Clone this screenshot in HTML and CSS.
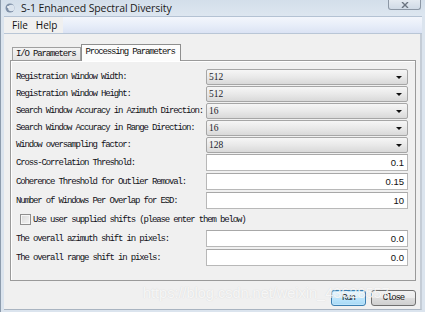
FILE: index.html
```html
<!DOCTYPE html>
<html lang="en">
<head>
  <meta charset="UTF-8" />
  <title>S-1 Enhanced Spectral Diversity</title>
  <link rel="stylesheet" href="styles.css">
</head>
<body>

  <div class="window">
    <div class="titlebar">
      <svg class="app-icon" width="10" height="10" viewBox="0 0 10 10">
        <circle cx="5" cy="5" r="4.5" fill="#7e8fa6"/>
        <circle cx="6.3" cy="5" r="3.2" fill="#dbe4ee"/>
        <circle cx="3" cy="4" r="0.9" fill="#fff"/>
      </svg>
      <span class="title">S-1 Enhanced Spectral Diversity</span>
      <div class="close-btn">
        <svg width="8" height="6" viewBox="0 0 8 6"><path d="M1 0 L7 6 M7 0 L1 6" stroke="#6b7480" stroke-width="1.4"/></svg>
      </div>
    </div>

    <div class="menubar">
      <span class="menu-item">File</span>
      <span class="menu-item">Help</span>
      <div class="menu-fill"></div>
    </div>

    <div class="content">
      <div class="tabs">
        <div class="tab">I/O Parameters</div>
        <div class="tab active">Processing Parameters</div>
      </div>

      <div class="panel">
        <div class="row">
          <label>Registration Window Width:</label>
          <div class="combo"><span>512</span><i class="arrow"></i></div>
        </div>
        <div class="row">
          <label>Registration Window Height:</label>
          <div class="combo"><span>512</span><i class="arrow"></i></div>
        </div>
        <div class="row">
          <label>Search Window Accuracy in Azimuth Direction:</label>
          <div class="combo"><span>16</span><i class="arrow"></i></div>
        </div>
        <div class="row">
          <label>Search Window Accuracy in Range Direction:</label>
          <div class="combo"><span>16</span><i class="arrow"></i></div>
        </div>
        <div class="row">
          <label>Window oversampling factor:</label>
          <div class="combo"><span>128</span><i class="arrow"></i></div>
        </div>

        <div class="row text-row">
          <label>Cross-Correlation Threshold:</label>
          <div class="field">0.1</div>
        </div>
        <div class="row text-row">
          <label>Coherence Threshold for Outlier Removal:</label>
          <div class="field">0.15</div>
        </div>
        <div class="row text-row">
          <label>Number of Windows Per Overlap for ESD:</label>
          <div class="field">10</div>
        </div>

        <div class="check-row">
          <span class="checkbox"></span>
          <label>Use user supplied shifts (please enter them below)</label>
        </div>

        <div class="row text-row">
          <label>The overall azimuth shift in pixels:</label>
          <div class="field">0.0</div>
        </div>
        <div class="row text-row">
          <label>The overall range shift in pixels:</label>
          <div class="field">0.0</div>
        </div>
      </div>

      <div class="buttons">
        <button class="btn run">Run</button>
        <button class="btn">Close</button>
      </div>
    </div>

    <div class="watermark">https://blog.csdn.net/weixin_43628557</div>
  </div>

</body>
</html>
```

FILE: styles.css
```css
* {
  box-sizing: border-box;
}

body {
  margin: 0;
  width: 425px;
  height: 312px;
  overflow: hidden;
  background-color: #d9e3ee;
}

.window {
  position: relative;
  width: 425px;
  height: 312px;
  display: flex;
  flex-direction: column;
  background-color: #dbe4ee;
  border-left: 1px solid #8d9cad;
}

/* title bar */
.titlebar {
  height: 16px;
  display: flex;
  align-items: center;
  padding-left: 4px;
  background: linear-gradient(#d3deea, #dde6f0);
}

.app-icon {
  margin-right: 6px;
}

.title {
  font-family: 'Open Sans', sans-serif;
  font-size: 10.5px;
  color: #1a1a1a;
  letter-spacing: -0.1px;
}

.close-btn {
  margin-left: auto;
  margin-right: 4px;
  margin-top: -7px;
  width: 33px;
  height: 10px;
  border: 1px solid #8c97a5;
  border-top: none;
  border-radius: 0 0 3px 3px;
  background: linear-gradient(#e4eaf1, #d0dae6);
  display: flex;
  justify-content: center;
  align-items: flex-end;
  padding-bottom: 1px;
}

/* menu bar */
.menubar {
  height: 18px;
  margin: 0 3px;
  display: flex;
  align-items: center;
  border-top: 1px solid #b4c2d3;
  border-bottom: 1px solid #b9c6d6;
  background: linear-gradient(#f6f8fc, #e4eaf6);
  font-family: 'Open Sans', sans-serif;
  font-size: 10px;
  color: #111;
}

.menu-item {
  padding: 0 4px;
  height: 100%;
  display: flex;
  align-items: center;
  background-color: #f0f0f0;
}

.menu-item:first-child {
  padding-left: 8px;
}

.menu-item:nth-child(2) {
  padding-right: 6px;
}

.menu-fill {
  flex: 1;
  height: 100%;
  background: linear-gradient(#f3f6fc 0%, #e8eef9 50%, #dbe3f4 100%);
}

/* content */
.content {
  flex: 1;
  margin: 0 3px 2px 3px;
  background-color: #f0f0f0;
  border-right: 2px solid #c4ccd6;
  border-bottom: 1px solid #a9b4c1;
  padding: 10px 4px 0 6px;
  display: flex;
  flex-direction: column;
}

.tabs {
  display: flex;
  align-items: flex-end;
  padding-left: 2px;
  height: 16px;
}

.tab {
  font-family: 'Liberation Mono', monospace;
  font-size: 9px;
  letter-spacing: -1.15px;
  color: #111;
  height: 13px;
  line-height: 12px;
  padding: 0 4px 0 3px;
  border: 1px solid #a0a0a0;
  border-bottom: none;
  background: linear-gradient(#f4f4f4, #e3e3e3);
}

.tab.active {
  height: 17px;
  line-height: 15px;
  padding: 0 5px 0 4px;
  background: #fcfcfc;
  border-color: #8e8e8e;
  position: relative;
  top: 1px;
}

.panel {
  border: 1px solid #9a9a9a;
  box-shadow: inset 1px 1px 0 #fff;
  height: 221px;
  padding: 8px 5px 0 5px;
}

.row {
  display: flex;
  align-items: center;
  height: 16px;
  margin-bottom: 1px;
}

label {
  font-family: 'Liberation Mono', monospace;
  font-size: 9px;
  letter-spacing: -1.15px;
  color: #101018;
  white-space: nowrap;
}

.row label {
  width: 190px;
  flex-shrink: 0;
}

.combo {
  width: 202px;
  height: 16px;
  border: 1px solid #a6a6a6;
  border-radius: 2px;
  background: linear-gradient(#f6f6f6 0%, #e9e9e9 50%, #d9d9d9 100%);
  display: flex;
  align-items: center;
  padding-left: 2px;
  font-family: 'Liberation Serif', serif;
  font-size: 9.5px;
  color: #1a1a2a;
}

.arrow {
  margin-left: auto;
  margin-right: 5px;
  width: 0;
  height: 0;
  border-left: 3px solid transparent;
  border-right: 3px solid transparent;
  border-top: 3px solid #111;
}

.text-row {
  height: 17px;
  margin-bottom: 2px;
}

.field {
  width: 202px;
  height: 17px;
  border: 1px solid #b8b8b8;
  border-top-color: #a8a8a8;
  background-color: #fff;
  text-align: right;
  padding-right: 3px;
  font-family: 'Liberation Sans', sans-serif;
  font-size: 9.5px;
  line-height: 15px;
  color: #111;
}

.check-row {
  display: flex;
  align-items: center;
  height: 19px;
  margin-top: -1px;
  margin-bottom: 1px;
  padding-left: 4px;
}

.checkbox {
  width: 11px;
  height: 11px;
  border: 1px solid #8f8f8f;
  background: linear-gradient(135deg, #d8d8d8, #f4f4f4);
  box-shadow: inset 0 0 0 1px #f6f6f6;
  margin-right: 2px;
}

/* buttons */
.buttons {
  display: flex;
  justify-content: flex-end;
  gap: 5px;
  padding-top: 9px;
}

.btn {
  font-family: 'Liberation Mono', monospace;
  font-size: 9px;
  letter-spacing: -1.15px;
  height: 16px;
  padding: 0;
  border: 1px solid #707070;
  border-radius: 3px;
  background: linear-gradient(#f2f2f2 0%, #ebebeb 50%, #dddddd 51%, #cfcfcf 100%);
  color: #111;
}

.btn.run {
  width: 35px;
  border-color: #3c7fb1;
  box-shadow: inset 0 0 0 1px #bde4fb;
  background: linear-gradient(#eaf6fd 0%, #d9f0fc 50%, #bee6fd 51%, #a7d9f5 100%);
}

.btn:not(.run) {
  width: 45px;
}

.watermark {
  position: absolute;
  left: 142px;
  top: 285px;
  font-family: 'Liberation Sans', sans-serif;
  font-size: 14.5px;
  color: rgba(255, 255, 255, 0.8);
  text-shadow: 0 0 1px rgba(120, 120, 120, 0.25);
  white-space: nowrap;
  pointer-events: none;
}
```
